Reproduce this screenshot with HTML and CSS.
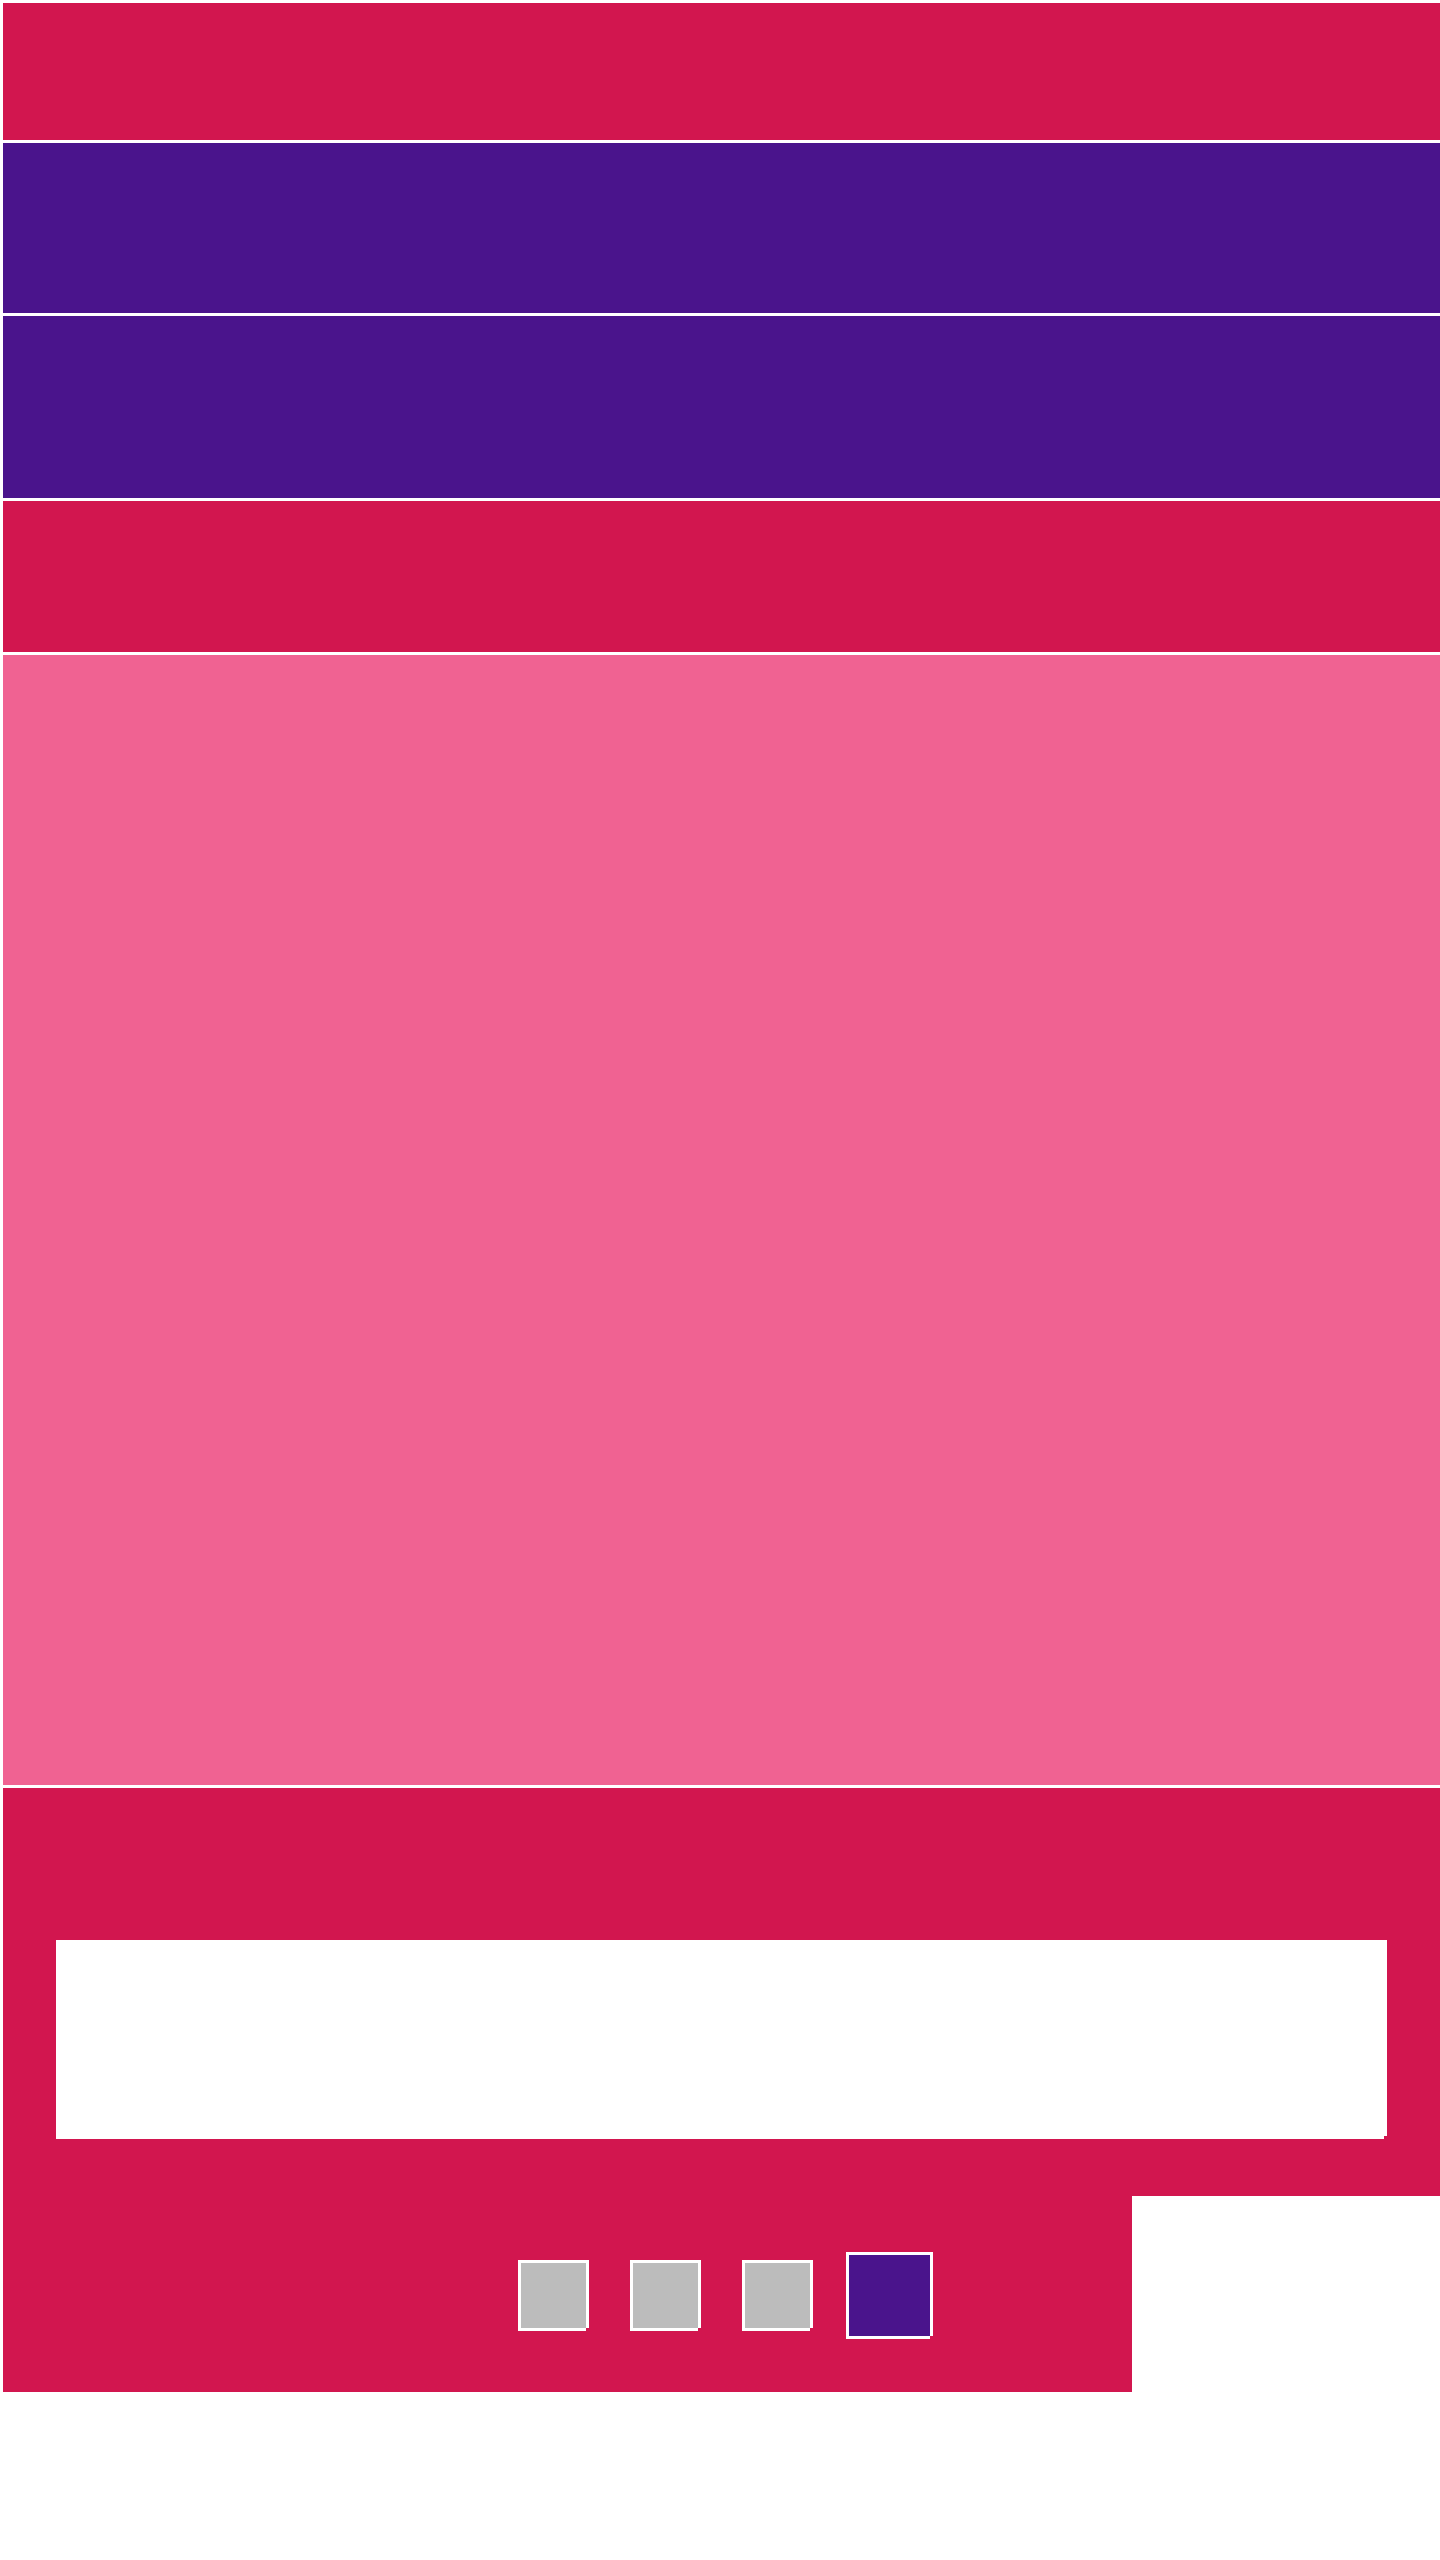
FILE: index.html
```html
<!DOCTYPE html>
<html lang="en">
<head>
<meta charset="utf-8">
<title>Layout</title>
<link rel="stylesheet" href="styles.css">
</head>
<body>
<div class="page">
  <header class="bar bar--top"></header>
  <nav class="bar bar--nav"></nav>
  <section class="bar bar--sub"></section>
  <section class="bar bar--banner"></section>
  <main class="hero"></main>
  <footer class="footer">
    <section class="panel">
      <div class="card"></div>
    </section>
    <div class="pager">
      <span class="dot"></span>
      <span class="dot"></span>
      <span class="dot"></span>
      <span class="dot dot--active"></span>
    </div>
  </footer>
</div>
</body>
</html>
```

FILE: styles.css
```css
html, body {
  margin: 0;
  padding: 0;
  background: #ffffff;
  overflow: hidden;
}

.page {
  width: 1437px;
  padding: 3px 0 0 3px;
  display: flex;
  flex-direction: column;
  gap: 3px;
}

.bar { width: 100%; }
.bar--top { height: 137px; background: #d2164f; }
.bar--nav { height: 170px; background: #4a148c; }
.bar--sub { height: 182px; background: #4a148c; }
.bar--banner { height: 151px; background: #d2164f; }

.hero {
  height: 1130px;
  background: #f06292;
}

.footer {
  display: flex;
  flex-direction: column;
}

.panel {
  background: #d2164f;
  padding: 152px 53px 57px 53px;
}

.card {
  position: relative;
  height: 199px;
  background: #ffffff;
}
.card::after {
  content: "";
  position: absolute;
  right: 0;
  bottom: 0;
  width: 3px;
  height: 3px;
  background: #d2164f;
}

.pager {
  width: 1129px;
  height: 196px;
  box-sizing: border-box;
  padding: 64px 0 0 515px;
  background: #d2164f;
  display: flex;
  align-items: flex-start;
  gap: 41px;
}

.dot {
  position: relative;
  box-sizing: border-box;
  width: 71px;
  height: 71px;
  flex: none;
  border: 3px solid #ffffff;
  background: #bcbcbc;
}
.dot::after {
  content: "";
  position: absolute;
  right: -3px;
  bottom: -3px;
  width: 3px;
  height: 3px;
  background: #d2164f;
}
.dot--active {
  width: 87px;
  height: 87px;
  margin: -8px -8px 0 -8px;
  background: #4a148c;
}
```
